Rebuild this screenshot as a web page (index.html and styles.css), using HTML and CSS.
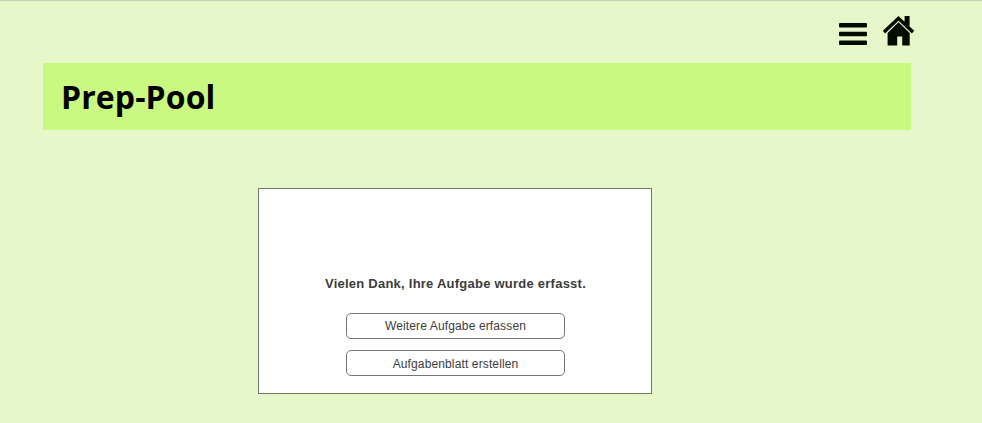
FILE: index.html
```html
<!DOCTYPE html>
<html lang="de">
<head>
<meta charset="utf-8">
<title>Prep-Pool</title>
<link rel="stylesheet" href="styles.css">
</head>
<body>
<div class="page">
  <nav class="toolbar">
    <svg class="icon-menu" viewBox="0 0 28 22" aria-hidden="true">
      <rect width="28" height="4.4" rx="1"/><rect y="8.8" width="28" height="4.4" rx="1"/><rect y="17.6" width="28" height="4.4" rx="1"/>
    </svg>
    <svg class="icon-home" viewBox="0 0 31 30" aria-hidden="true">
      <path d="M15.5 0 21.6 5.7V0h5v10.4l4.6 4.4-2.3 2.8L15.5 4.8 2.1 17.6-.2 14.8Z"/>
      <path d="M15.5 6.2 26.7 17v12.4h-7.5v-9h-5v9H4.6V17Z"/>
    </svg>
  </nav>
  <header class="title-bar"><h1>Prep-Pool</h1></header>
  <main class="panel">
    <p class="message">Vielen Dank, Ihre Aufgabe wurde erfasst.</p>
    <button class="action">Weitere Aufgabe erfassen</button>
    <button class="action action-sheet">Aufgabenblatt erstellen</button>
  </main>
</div>
</body>
</html>
```

FILE: styles.css
```css
* { box-sizing: border-box; }
body {
  margin: 0;
  height: 423px;
  overflow: hidden;
  background: #e6f8c9;
  border-top: 1px solid #c7d0bb;
}
.page { width: 868px; margin-left: 43px; }
.toolbar {
  display: flex;
  gap: 16px;
  height: 62px;
  padding: 15px 0 0 796px;
}
.toolbar svg { display: block; flex: none; fill: #030a00; overflow: visible; }
.icon-menu { width: 28px; height: 22px; margin-top: 7px; }
.icon-home { width: 31px; height: 30px; }
.title-bar {
  display: flex;
  align-items: center;
  height: 67px;
  padding-left: 18px;
  background: #caf982;
}
h1 {
  margin: 0;
  font: bold 32px/44px "Open Sans", sans-serif;
  letter-spacing: 0.1px;
  color: #000;
}
.panel {
  display: flex;
  flex-direction: column;
  align-items: center;
  width: 394px;
  height: 206px;
  margin: 58px 0 0 215px;
  padding-top: 87px;
  background: #fff;
  border: 1px solid #717969;
  font-family: "Liberation Sans", Arial, sans-serif;
  color: #3c3c3c;
}
.message {
  margin: 0 0 21px 1px;
  font-size: 13px;
  font-weight: bold;
  line-height: 16px;
  letter-spacing: 0.24px;
  white-space: nowrap;
}
.action {
  width: 219px;
  height: 26px;
  margin: 0 0 11px 1px;
  padding: 0;
  background: #fff;
  border: 1px solid #757575;
  border-radius: 5px;
  font: 12px/16px "Liberation Sans", Arial, sans-serif;
  letter-spacing: 0.13px;
  color: #3c3c3c;
}
.action-sheet { padding-top: 2px; }
```
